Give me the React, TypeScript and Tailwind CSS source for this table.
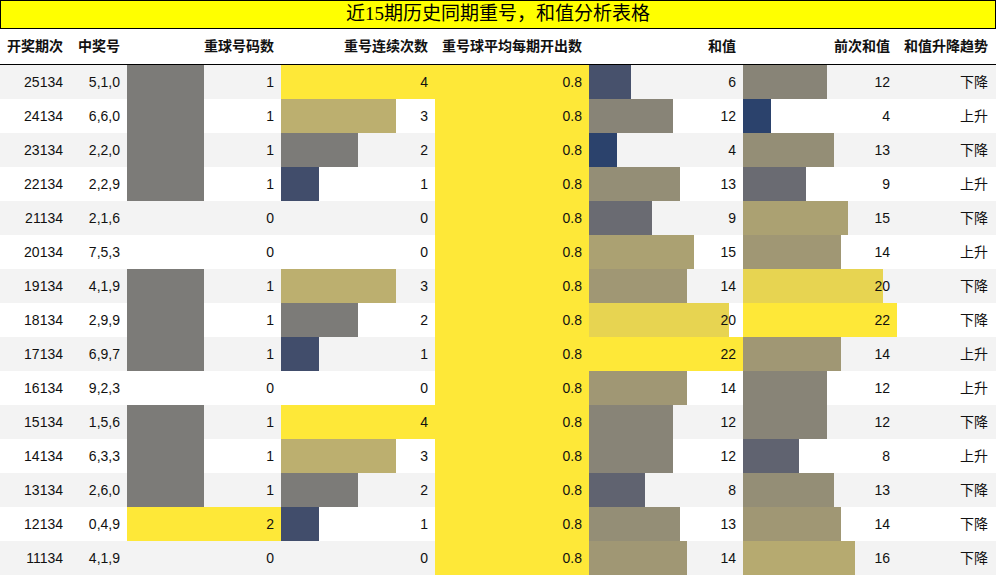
import React from 'react';

type Row = [string, string, number, number, number, number, number, string];

const rows: Row[] = [
    ['25134', '5,1,0', 1, 4, 0.8, 6, 12, '下降'],
    ['24134', '6,6,0', 1, 3, 0.8, 12, 4, '上升'],
    ['23134', '2,2,0', 1, 2, 0.8, 4, 13, '下降'],
    ['22134', '2,2,9', 1, 1, 0.8, 13, 9, '上升'],
    ['21134', '2,1,6', 0, 0, 0.8, 9, 15, '下降'],
    ['20134', '7,5,3', 0, 0, 0.8, 15, 14, '上升'],
    ['19134', '4,1,9', 1, 3, 0.8, 14, 20, '下降'],
    ['18134', '2,9,9', 1, 2, 0.8, 20, 22, '下降'],
    ['17134', '6,9,7', 1, 1, 0.8, 22, 14, '上升'],
    ['16134', '9,2,3', 0, 0, 0.8, 14, 12, '上升'],
    ['15134', '1,5,6', 1, 4, 0.8, 12, 12, '下降'],
    ['14134', '6,3,3', 1, 3, 0.8, 12, 8, '上升'],
    ['13134', '2,6,0', 1, 2, 0.8, 8, 13, '下降'],
    ['12134', '0,4,9', 2, 1, 0.8, 13, 14, '下降'],
    ['11134', '4,1,9', 0, 0, 0.8, 14, 16, '下降'],
];

const headers = ['开奖期次', '中奖号', '重球号码数', '重号连续次数', '重号球平均每期开出数', '和值', '前次和值', '和值升降趋势'];

// cividis colour stops
const stops: [number, number, number][] = [
    [0, 34, 78],
    [24, 56, 108],
    [65, 77, 107],
    [99, 101, 112],
    [124, 123, 120],
    [157, 149, 117],
    [188, 175, 111],
    [222, 205, 91],
    [254, 232, 56],
];

const cividis = (t: number) => {
    const x = Math.max(0, Math.min(1, t)) * (stops.length - 1);
    const i = Math.min(Math.floor(x), stops.length - 2);
    const f = x - i;
    const c = stops[i].map((v, k) => Math.round(v + (stops[i + 1][k] - v) * f));
    return `rgb(${c[0]},${c[1]},${c[2]})`;
};

const maxOf = (k: number) => Math.max(...rows.map((r) => r[k] as number));

const BarCell = ({ value, max }: { value: number; max: number }) => {
    const pct = (value / max) * 100;
    const bg = value > 0 ? `linear-gradient(90deg, ${cividis(value / max)} ${pct}%, transparent ${pct}%)` : undefined;
    return (
        <div className="flex items-center justify-end pr-[7px]" style={{ background: bg }}>
            {value}
        </div>
    );
};

const App = () => {
    const barCols = [2, 3, 4, 5, 6];
    const maxes = Object.fromEntries(barCols.map((k) => [k, maxOf(k)]));

    return (
        <div className="w-[996px] h-[576px] bg-white text-[14px] text-[#111] overflow-hidden" style={{ fontFamily: '"Liberation Sans", "Noto Sans CJK SC", sans-serif' }}>
            <div
                className="h-[29px] border border-black bg-[#ffff00] flex items-center justify-center text-[19px] text-black"
                style={{ fontFamily: '"Liberation Serif", "Noto Sans CJK SC", serif' }}
            >
                近15期历史同期重号，和值分析表格
            </div>
            <div className="grid grid-cols-[70px_57px_154px_154px_154px_154px_154px_99px] h-[36px] border-b border-black font-bold">
                {headers.map((h, i) => (
                    <div key={h} className={`flex items-center justify-end ${i === 7 ? 'pr-[8px]' : 'pr-[7px]'}`}>
                        {h}
                    </div>
                ))}
            </div>
            {rows.map((r, idx) => (
                <div
                    key={r[0]}
                    className={`grid grid-cols-[70px_57px_154px_154px_154px_154px_154px_99px] h-[34px] ${idx % 2 === 0 ? 'bg-[#f3f3f3]' : 'bg-white'}`}
                >
                    <div className="flex items-center justify-end pr-[7px]">{r[0]}</div>
                    <div className="flex items-center justify-end pr-[7px]">{r[1]}</div>
                    {barCols.map((k) => (
                        <BarCell key={k} value={r[k] as number} max={maxes[k]} />
                    ))}
                    <div className="flex items-center justify-end pr-[8px]">{r[7]}</div>
                </div>
            ))}
        </div>
    );
};

export default App;
